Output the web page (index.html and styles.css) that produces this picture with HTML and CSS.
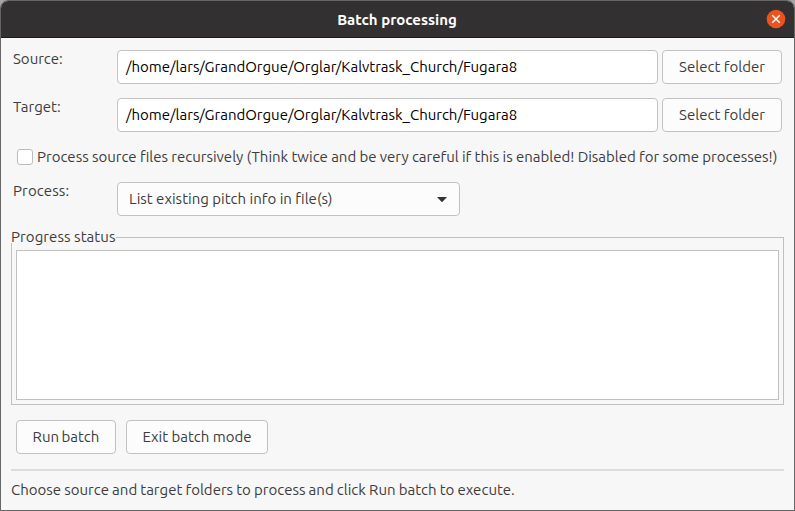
FILE: index.html
```html
<!DOCTYPE html>
<html lang="en">
<head>
<meta charset="utf-8">
<title>Batch processing</title>
<link rel="stylesheet" href="styles.css">
</head>
<body>
<div class="window">
  <header class="titlebar">
    <h1 class="title">Batch processing</h1>
    <button class="close" aria-label="Close">
      <svg width="20" height="20" viewBox="0 0 20 20"><circle cx="10" cy="10" r="9.3" fill="#e95420"/><path d="M6.3 6.3l7.4 7.4M13.7 6.3l-7.4 7.4" stroke="#fff" stroke-width="1.5" fill="none"/></svg>
    </button>
  </header>
  <main class="content">
    <div class="row">
      <label class="label">Source:</label>
      <div class="field"><span>/home/lars/GrandOrgue/Orglar/Kalvtrask_Church/Fugara8</span></div>
      <button class="btn select">Select folder</button>
    </div>
    <div class="row">
      <label class="label">Target:</label>
      <div class="field"><span>/home/lars/GrandOrgue/Orglar/Kalvtrask_Church/Fugara8</span></div>
      <button class="btn select">Select folder</button>
    </div>
    <label class="check"><span class="box"></span><span>Process source files recursively (Think twice and be very careful if this is enabled! Disabled for some processes!)</span></label>
    <div class="row">
      <label class="label process">Process:</label>
      <div class="combo"><span>List existing pitch info in file(s)</span>
        <svg width="10" height="5" viewBox="0 0 10 5"><path d="M0 0h10L5.8 4.6q-.8.7-1.6 0z" fill="#333"/></svg>
      </div>
    </div>
    <fieldset class="progress">
      <legend>Progress status</legend>
      <div class="log"></div>
    </fieldset>
    <div class="actions">
      <button class="btn run">Run batch</button>
      <button class="btn exit">Exit batch mode</button>
    </div>
  </main>
  <footer class="status">Choose source and target folders to process and click Run batch to execute.</footer>
</div>
</body>
</html>
```
FILE: styles.css
```css
* { box-sizing: border-box; }
body {
  margin: 0;
  background: linear-gradient(#a5a7a5 0 30px, #5f5f5f 30px);
  font: 15px/20px "Ubuntu", "Noto Sans", sans-serif;
  color: #3d3d3d;
  white-space: nowrap;
}
.window {
  width: 795px;
  height: 511px;
  border: 1px solid #666;
  border-radius: 8px 8px 0 0;
  background: #f7f7f7;
  overflow: hidden;
}
.titlebar {
  height: 37px;
  background: #323030;
  border-bottom: 1px solid #1c1b1b;
  display: grid;
  grid-template-columns: 1fr auto 1fr;
  align-items: center;
  padding: 0 8px;
}
.title {
  grid-column: 2;
  margin: 0;
  padding: 2px 1px 0 0;
  font-size: 15px;
  line-height: 20px;
  font-weight: 700;
  color: #fff;
}
.close {
  justify-self: end;
  width: 20px;
  height: 20px;
  padding: 0;
  border: 0;
  background: none;
}
.close svg { display: block; }
.content { padding: 12px 10px 0; }
.row {
  display: flex;
  height: 34px;
  margin: 0 2px 14px;
}
.label { width: 104px; flex: none; margin-top: -1px; }
.process { letter-spacing: .12px; }
.field, .btn, .combo {
  height: 34px;
  border: 1px solid #c2c2c2;
  border-radius: 4px;
  display: flex;
  align-items: center;
}
.field {
  width: 541px;
  margin-right: 4px;
  padding-left: 8px;
  background: #fff;
  color: #000;
  letter-spacing: -.015px;
}
.btn {
  padding: 0;
  font: inherit;
  color: inherit;
  background: #fcfcfc;
  justify-content: center;
}
.select { width: 120px; }
.check {
  display: flex;
  align-items: center;
  height: 20px;
  margin: 15px 0 15px 6px;
  word-spacing: -.16px;
}
.box {
  flex: none;
  width: 16px;
  height: 16px;
  margin-right: 4px;
  border: 1px solid #bdbdbd;
  border-radius: 3px;
  background: #fff;
}
.combo {
  width: 343px;
  padding: 0 12px 0 11px;
  justify-content: space-between;
  background: #fcfcfc;
}
.progress {
  height: 174px;
  margin: 15px 0 0;
  padding: 7px 4px 4px;
  border: 1px solid #c0c0c0;
}
.progress legend {
  padding: 0;
  margin-left: -5px;
  height: 12px;
  line-height: 12px;
  letter-spacing: .07px;
}
.log { height: 150px; border: 1px solid #c0c0c0; background: #fff; }
.actions {
  display: flex;
  gap: 10px;
  margin: 15px 5px;
}
.run { width: 100px; word-spacing: -1px; }
.exit { width: 142px; }
.status {
  margin: 0 10px;
  padding-top: 9px;
  border-top: 2px solid #dcdcdc;
  word-spacing: -.3px;
}
```
